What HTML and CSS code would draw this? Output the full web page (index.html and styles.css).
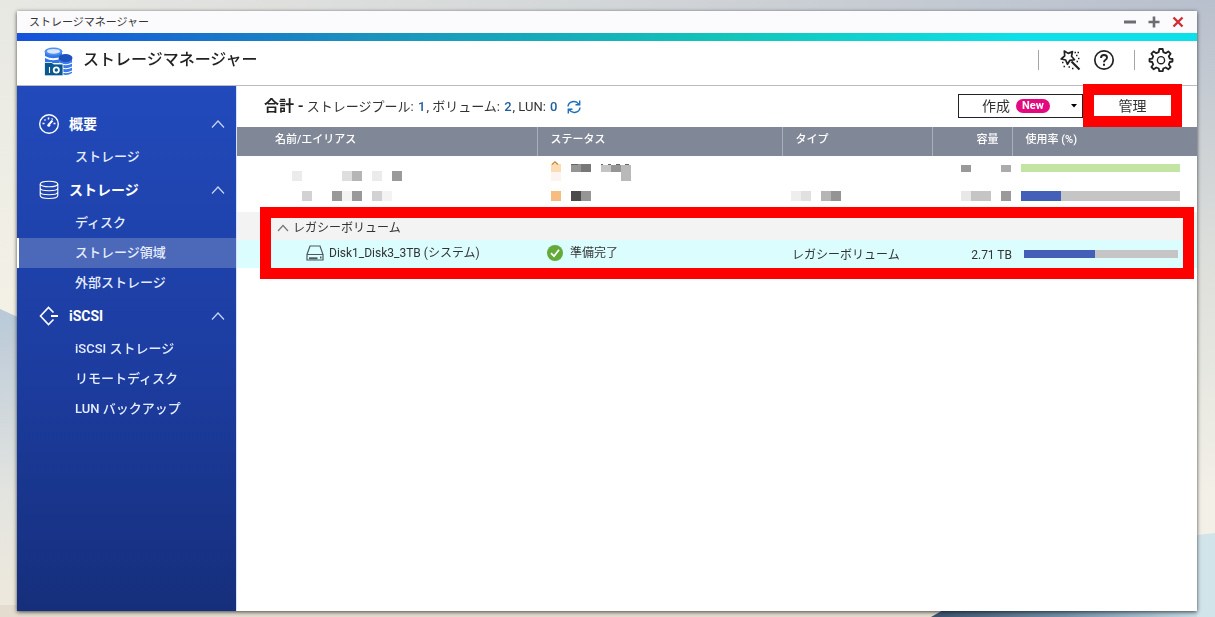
FILE: index.html
```html
<!DOCTYPE html>
<html lang="ja">
<head>
<meta charset="utf-8">
<title>ストレージマネージャー</title>
<link rel="stylesheet" href="styles.css">
</head>
<body>
<svg class="wallpaper" viewBox="0 0 1215 617" preserveAspectRatio="none" aria-hidden="true">
  <defs>
    <linearGradient id="sky" x1="0" y1="0" x2="1" y2="0"><stop offset="0" stop-color="#e8e8e3"/><stop offset=".5" stop-color="#d3d6d8"/><stop offset="1" stop-color="#b8c0cd"/></linearGradient>
    <linearGradient id="sideR" x1="0" y1="0" x2="0" y2="1"><stop offset="0" stop-color="#b8c0cd"/><stop offset=".4" stop-color="#dcdedb"/><stop offset=".8" stop-color="#f2f0e7"/></linearGradient>
    <linearGradient id="sideL" x1="0" y1="0" x2="0" y2="1"><stop offset="0" stop-color="#e8e8e3"/><stop offset=".5" stop-color="#f3f1e6"/></linearGradient>
    <linearGradient id="hill" x1="0" y1="0" x2="0" y2="1"><stop offset="0" stop-color="#b9c9d8"/><stop offset=".6" stop-color="#e3e4e0"/><stop offset="1" stop-color="#efe9dc"/></linearGradient>
    <linearGradient id="lake" x1="0" y1="0" x2="1" y2="0"><stop offset="0" stop-color="#3b526d"/><stop offset=".5" stop-color="#7391a8"/><stop offset="1" stop-color="#c6dce4"/></linearGradient>
  </defs>
  <rect width="1215" height="617" fill="url(#sky)"/>
  <rect width="17" height="617" fill="url(#sideL)"/>
  <rect x="1197" width="18" height="617" fill="url(#sideR)"/>
  <path d="M0 309L20 318V617H0Z" fill="url(#hill)"/>
  <path d="M1190 536L1215 533V617H1190Z" fill="#d0e4ea"/>
  <rect y="605" width="945" height="12" fill="#e3dccf"/>
  <path d="M931 617L952 605H1197V617Z" fill="url(#lake)"/>
</svg>
<main class="window">
  <div class="titlebar">
    <span class="titlebar-name">ストレージマネージャー</span>
    <button class="win-btn" aria-label="最小化"><svg width="12" height="12" viewBox="0 0 12 12"><path d="M0 6H12" stroke="#6c6c72" stroke-width="3"/></svg></button>
    <button class="win-btn" aria-label="最大化"><svg width="12" height="12" viewBox="0 0 12 12"><path d="M.5 6H11.5M6 .5V11.5" stroke="#6c6c72" stroke-width="2.6"/></svg></button>
    <button class="win-btn" aria-label="閉じる"><svg width="12" height="12" viewBox="0 0 12 12"><path d="M1.500 1.500L10.500 10.500M10.500 1.500L1.500 10.500" stroke="#cf2e35" stroke-width="2.400"/></svg></button>
  </div>
  <div class="accent"></div>
  <header class="app-header">
    <svg class="logo" width="29" height="30" viewBox="0 0 29 30" aria-hidden="true">
      <path d="M1 4V16H18V4Z" fill="#3277e8"/><path d="M1 9Q9 13.500 18 9V11Q9 15.500 1 11Z" fill="#fff"/>
      <ellipse cx="9.500" cy="4.500" rx="9" ry="4" fill="#4f8ff0"/><ellipse cx="9.500" cy="4.300" rx="6.500" ry="2.400" fill="#d7e7fb"/>
      <path d="M15 11V26Q22 30 28 26V11Z" fill="#3c7bea"/><ellipse cx="21.500" cy="11" rx="7" ry="4" fill="#1d51bd"/>
      <path d="M15 16Q22 19.500 28 16M15 20Q22 23.500 28 20M15 24Q22 27.500 28 24" fill="none" stroke="#fff" stroke-width="1.100"/>
      <path d="M.5 15.500H8L9.500 17H19V28.800H.5Z" fill="#09588f" stroke="#fff" stroke-width=".8"/>
      <path d="M5.500 20V26" stroke="#fff" stroke-width="1.100"/><circle cx="12.300" cy="23" r="2.600" fill="none" stroke="#fff" stroke-width="1.800"/>
    </svg>
    <h1>ストレージマネージャー</h1>
    <div class="tools">
      <span class="sep"></span>
      <button class="tool wand" aria-label="ウィザード"><svg width="22" height="22" viewBox="0 0 22 22" fill="none" stroke="#222" stroke-width="1.700"><path d="M5.300 2L9.200 4.400L13.500 2.600L12.500 7.200L15.500 10.700L10.900 11.300L8.500 15.300L6.700 11L2.200 10L5.700 6.800Z" stroke-linejoin="round"/><path d="M12.500 12.500L20.500 20.500" stroke-width="2.200"/><path d="M15.500 3.500h1.500M18.500 3.500h1.500M17 6.500h1.500M19 9.500h1.500M17.500 12.500h1.500M3 13.500h1.500M4.500 17.500h1.500M9.500 18h1.500M13 19.500h1.500" stroke-width="1.300"/></svg></button>
      <button class="tool help" aria-label="ヘルプ"><svg width="22" height="22" viewBox="0 0 22 22" fill="none" stroke="#222"><circle cx="11" cy="11" r="9.200" stroke-width="1.700"/><path d="M8 9Q8 6 11 6Q14 6 14 8.500Q14 10 12.300 11Q11 11.800 11 13.300" stroke-width="1.900"/><path d="M11 14.800V16.800" stroke-width="2"/></svg></button>
      <span class="sep"></span>
      <button class="tool gear" aria-label="設定"><svg width="26" height="26" viewBox="0 0 26 26" fill="none" stroke="#222" stroke-width="1.800" stroke-linejoin="round"><path d="M11.300 2H14.700L15.300 5.200L17.700 6.200L20.300 4.400L22.600 6.700L20.800 9.300L21.800 11.700L24.500 12V14.500L21.800 15L20.800 17.500L22.600 20L20.300 22.300L17.700 20.500L15.300 21.500L14.700 24.200H11.300L10.700 21.500L8.300 20.500L5.700 22.300L3.400 20L5.200 17.500L4.200 15L1.500 14.500V12L4.200 11.700L5.200 9.300L3.400 6.700L5.700 4.400L8.300 6.200L10.700 5.200Z"/><circle cx="13" cy="13.200" r="3.600" stroke-width="1.400"/></svg></button>
    </div>
  </header>
  <div class="body">
    <nav class="sidebar">
      <button class="nav-group">
        <svg width="22" height="22" viewBox="0 0 22 22" fill="none" stroke="#fff"><circle cx="11" cy="11" r="9.300" stroke-width="1.400"/><path d="M10.500 12L14.500 7.500" stroke-width="1.900"/><circle cx="10.800" cy="12.200" r="1.500" fill="#fff" stroke="none"/><path d="M4.500 10.500h2M15.500 10.500h2M6.500 6.500l1 1M10.500 4.500v2M14.500 5.500l-.6 1" stroke-width="1.500"/></svg>
        <span>概要</span><svg class="chev" width="14" height="8" viewBox="0 0 14 8"><path d="M1 7.500L7 1L13 7.500"/></svg>
      </button>
      <a class="nav-item" href="#">ストレージ</a>
      <button class="nav-group">
        <svg width="22" height="22" viewBox="0 0 22 22" fill="none" stroke="#fff" stroke-width="1.100"><ellipse cx="11" cy="5" rx="8.800" ry="2.800"/><path d="M2.200 5V16.500C2.200 20.500 19.800 20.500 19.800 16.500V5M2.200 9C2.200 12.700 19.800 12.700 19.800 9M2.200 13C2.200 16.700 19.800 16.700 19.800 13"/></svg>
        <span>ストレージ</span><svg class="chev" width="14" height="8" viewBox="0 0 14 8"><path d="M1 7.500L7 1L13 7.500"/></svg>
      </button>
      <a class="nav-item" href="#">ディスク</a>
      <a class="nav-item active" href="#">ストレージ領域</a>
      <a class="nav-item" href="#">外部ストレージ</a>
      <button class="nav-group">
        <svg width="22" height="22" viewBox="0 0 22 22" fill="none" stroke="#fff"><path d="M15.500 7.500L10.500 2.500L2.500 11L10.500 19.500L15.500 14.500" stroke-width="1.600"/><path d="M13 11H20" stroke-width="2"/></svg>
        <span>iSCSI</span><svg class="chev" width="14" height="8" viewBox="0 0 14 8"><path d="M1 7.500L7 1L13 7.500"/></svg>
      </button>
      <a class="nav-item" href="#">iSCSI ストレージ</a>
      <a class="nav-item" href="#">リモートディスク</a>
      <a class="nav-item" href="#">LUN バックアップ</a>
    </nav>
    <section class="content">
      <div class="summary">
        <p><strong>合計 -</strong> ストレージプール: <b>1</b>, ボリューム: <b>2</b>, LUN: <b>0</b></p>
        <button class="refresh" aria-label="更新"><svg width="14" height="14" viewBox="0 0 14 14" fill="none" stroke="#1d6fb8" stroke-width="1.400"><path d="M1 6.500C1.300 1.500 8.500-.5 12 4.300M13 7.500C12.700 12.500 5.500 14.500 2 9.700"/><path d="M12.700 .5V4.700H8.500M1.300 13.500V9.300H5.500"/></svg></button>
        <div class="actions">
          <button class="create"><span>作成</span><span class="new">New</span><svg width="6" height="4" viewBox="0 0 6 4"><path d="M0 0H6L3 3.500Z" fill="#000"/></svg></button>
          <button class="manage">管理</button>
        </div>
      </div>
      <div class="table-wrap">
      <table>
        <colgroup><col class="c-name"><col class="c-status"><col class="c-type"><col class="c-size"><col></colgroup>
        <thead><tr><th>名前/エイリアス</th><th>ステータス</th><th>タイプ</th><th class="num">容量</th><th>使用率 (%)</th></tr></thead>
        <tbody>
          <tr>
            <td class="masked"><svg width="180" height="28"><path fill="#ebebeb" d="M55 15h10v10h-10zM135 15h10v10h-10z"/><path fill="#dedede" d="M105 15h10v10h-10z"/><path fill="#b5b5b5" d="M115 15h10v10h-10z"/><path fill="#9a9a9a" d="M155 15h10v10h-10z"/></svg></td>
            <td class="masked"><svg width="120" height="28"><path fill="#fddcb3" d="M14 8h10v8h-10z"/><path fill="#fdf4f2" d="M14 16h10v9h-10z"/><path d="M15 8.500L18 6L21 8.500" fill="none" stroke="#c88a3c" stroke-width="1.500"/><path fill="#959595" d="M34 8h10v8h-10zM74 9h10v7h-10z"/><path fill="#777" d="M44 8h10v8h-10z"/><path fill="#c4c4c4" d="M64 9h10v7h-10z"/><path fill="#b9b9b9" d="M84 9h10v16h-10z"/><path d="M34 8.500h7M64 8.500h2M71 8.500h3M79 8.500h4M88 8.500h4" stroke="#666"/></svg></td>
            <td class="masked"></td>
            <td class="masked"><svg width="80" height="28"><path fill="#999" d="M29 9h10v7h-10z"/><path fill="#ababab" d="M69 9h10v7h-10z"/></svg></td>
            <td class="usage"><div class="bar pool"></div></td>
          </tr>
          <tr>
            <td class="masked"><svg width="180" height="28"><path fill="#d2d2d5" d="M65 7h10v10h-10zM135 7h10v10h-10z"/><path fill="#999" d="M95 7h10v10h-10zM115 7h10v10h-10z"/><path fill="#f3f3f3" d="M105 7h10v10h-10zM145 7h10v10h-10z"/></svg></td>
            <td class="masked"><svg width="120" height="28"><path fill="#f7bd80" d="M14 7h10v10h-10z"/><path fill="#4b4b4b" d="M34 7h10v10h-10z"/><path fill="#959595" d="M44 7h10v10h-10z"/></svg></td>
            <td class="masked"><svg width="80" height="28"><path fill="#eee" d="M9 7h10v10h-10z"/><path fill="#e0e0e0" d="M19 7h10v10h-10z"/><path fill="#b5b5b5" d="M39 7h10v10h-10z"/><path fill="#949494" d="M49 7h10v10h-10z"/></svg></td>
            <td class="masked"><svg width="80" height="28"><path fill="#e8e8e8" d="M29 7h10v10h-10z"/><path fill="#c5c5c5" d="M39 7h20v10h-20z"/><path fill="#9a9a9a" d="M69 7h10v10h-10z"/></svg></td>
            <td class="usage"><div class="bar volume"><div class="fill" style="width:25%"></div></div></td>
          </tr>
          <tr class="group"><td colspan="5"><div class="cell"><svg width="12" height="8" viewBox="0 0 12 8"><path d="M1 7L6 1.500L11 7" fill="none" stroke="#777" stroke-width="1.200"/></svg>レガシーボリューム</div></td></tr>
          <tr class="selected">
            <td><div class="cell disk"><svg width="18" height="16" viewBox="0 0 18 16" fill="none" stroke="#4a5a60" stroke-width="1.200"><path d="M1 9.500L4 1H14L17 9.500V15H1ZM1 9.500H17"/><path d="M3 13.300H11.500" stroke-width="2"/><path d="M14 12.500h1.500" stroke-width="2"/></svg>Disk1_Disk3_3TB (システム)</div></td>
            <td><div class="cell status"><svg width="16" height="16" viewBox="0 0 16 16"><circle cx="8" cy="8" r="8" fill="#64aa3a"/><path d="M4 8.200L7 11.200L12 4.800" fill="none" stroke="#fff" stroke-width="1.800"/></svg>準備完了</div></td>
            <td class="type">レガシーボリューム</td>
            <td class="num">2.71 TB</td>
            <td class="usage"><div class="bar legacy"><div class="fill" style="width:46%"></div></div></td>
          </tr>
        </tbody>
      </table>
      <div class="mark"></div>
      </div>
    </section>
  </div>
</main>
</body>
</html>
```

FILE: styles.css
```css
* { box-sizing: border-box; }
body {
  margin: 0;
  min-height: 100vh;
  display: flex;
  padding: 11px 18px 6px 17px;
  background: #e3e3df;
  color: #333;
  font: 12px/16px Roboto, "Noto Sans CJK JP", sans-serif;
}
button { font: inherit; color: inherit; background: none; border: 0; padding: 0; }
svg { display: block; flex: none; }
h1, p { margin: 0; }
.wallpaper { position: fixed; inset: 0; width: 100%; height: 100%; z-index: -1; }
.window {
  flex: 1;
  min-width: 0;
  display: flex;
  flex-direction: column;
  background: #fff;
  box-shadow: 0 1px 4px rgba(0, 0, 0, .7);
}
.titlebar {
  display: flex;
  align-items: center;
  gap: 12px;
  height: 22px;
  padding: 0 13px 0 12px;
  background: #fbfafc;
  font-size: 11px;
}
.titlebar-name { flex: 1; padding-top: 2px; }
.accent { height: 8px; background: linear-gradient(90deg, #1652dc, #1a93bd 30%, #11c5b8 60%, #0de0e8 85%, #0de0e8); }
.app-header {
  display: flex;
  align-items: center;
  gap: 10px;
  height: 45px;
  padding: 0 23px 6px 27px;
  border-bottom: 1px solid #bbb;
}
.logo { margin-top: 3px; }
h1 { font-size: 16px; line-height: 24px; font-weight: 500; color: #222; }
.tools { display: flex; align-items: center; margin-left: auto; }
.sep { width: 1px; height: 20px; background: #a5a5a5; }
.wand { margin-left: 20px; }
.help { margin: 0 19px 0 12px; }
.gear { margin-left: 13px; }
.body { flex: 1; display: flex; }
.sidebar {
  flex: none;
  width: 219px;
  padding-top: 20px;
  background: linear-gradient(#224abb, #1c3c9f 55%, #162f7c);
  color: #fff;
}
.nav-group {
  display: flex;
  align-items: center;
  gap: 9px;
  width: 100%;
  height: 36px;
  padding: 0 11px 0 21px;
  font-size: 14px;
  font-weight: 700;
  text-align: left;
}
.nav-group span { flex: 1; }
.chev path { fill: none; stroke: #c9d5f5; stroke-width: 1.2; }
.nav-item {
  display: block;
  padding-left: 58px;
  font-size: 13px;
  font-weight: 500;
  line-height: 30px;
  color: #e6edff;
  text-decoration: none;
}
.nav-item.active { background: #4b68b9; border-left: 2px solid #fff; padding-left: 56px; }
.content { flex: 1; min-width: 0; border-left: 1px solid #d5e0fb; }
.summary { display: flex; align-items: center; height: 41px; padding: 0 15px 0 27px; font-size: 13px; }
.summary strong { font-size: 15px; color: #222; }
.summary b { margin: 0 1px; font-weight: 500; color: #215d9e; }
.refresh { margin-left: 9px; }
.actions { display: flex; align-items: center; margin-left: auto; font-size: 14px; }
.create {
  display: flex;
  align-items: center;
  gap: 6px;
  width: 125px;
  height: 24px;
  margin-top: -2px;
  padding: 0 5px 0 23px;
  border: 1px solid #222;
}
.create svg { margin-left: auto; }
.new { padding: 0 6px; border-radius: 7px; background: #e5097f; color: #fff; font-size: 11px; font-weight: 700; line-height: 14px; }
.manage { width: 99px; height: 43px; margin-top: -2px; border: 11px solid #f00; line-height: 20px; }
.table-wrap { position: relative; }
table { width: 100%; table-layout: fixed; border-collapse: collapse; }
.c-name { width: 300px; }
.c-status { width: 245px; }
.c-type { width: 150px; }
.c-size { width: 80px; }
th {
  height: 29px;
  padding: 0 13px 4px;
  background: #808797;
  border-right: 1px solid #a9afba;
  color: #fff;
  font-size: 11px;
  font-weight: 500;
  text-align: left;
}
th:first-child { padding-left: 38px; }
th:last-child { border-right: 0; }
td { height: 28px; padding: 0; }
.masked { overflow: hidden; }
th.num { text-align: right; }
td.num { text-align: right; padding-top: 1px; }
.cell { display: flex; align-items: center; }
.group td { background: #f3f3f3; padding: 3px 0 0 40px; }
.group .cell { gap: 4px; }
.selected td { background: #dcfdfe; padding-bottom: 2px; }
.disk { gap: 5px; padding-left: 69px; }
.status { gap: 7px; padding-left: 10px; }
.selected .type { padding: 3px 0 2px 10px; }
.selected .num { padding-top: 3px; }
.bar { background: #c5c5c5; }
.pool { height: 8px; margin: -4px 17px 0 9px; background: #c3e4a3; }
.volume { height: 10px; margin: -4px 17px 0 9px; }
.legacy { height: 8px; margin: 2px 19px 0 12px; }
.fill { height: 100%; background: #435fb8; }
.mark { position: absolute; inset: 80px 3px -11px 23px; border: 11px solid #f00; pointer-events: none; }
```
